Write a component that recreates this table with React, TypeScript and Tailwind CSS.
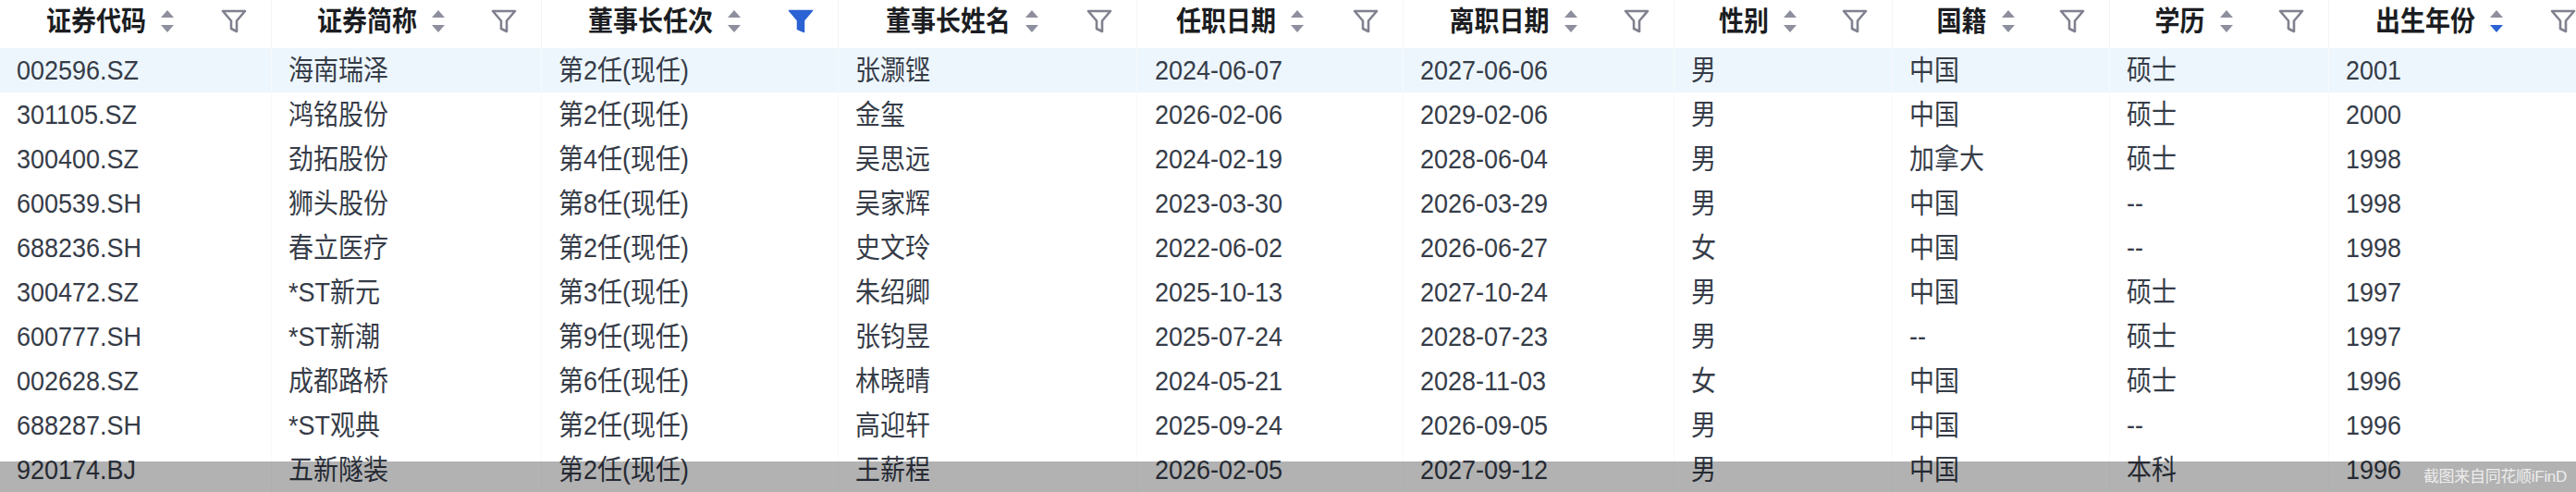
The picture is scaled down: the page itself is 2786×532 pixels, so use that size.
import React from 'react';

type Col = {
  title: string;
  width: string;
  right?: boolean;
  sortDown?: boolean;
  filterOn?: boolean;
};

const cols: Col[] = [
  { title: '证券代码', width: '294px' },
  { title: '证券简称', width: '292px' },
  { title: '董事长任次', width: '321px', filterOn: true },
  { title: '董事长姓名', width: '323px' },
  { title: '任职日期', width: '288px', right: true },
  { title: '离职日期', width: '293px' },
  { title: '性别', width: '236px' },
  { title: '国籍', width: '235px' },
  { title: '学历', width: '237px' },
  { title: '出生年份', width: '294px', sortDown: true },
];

const rows: string[][] = [
  ['002596.SZ', '海南瑞泽', '第2任(现任)', '张灏铿', '2024-06-07', '2027-06-06', '男', '中国', '硕士', '2001'],
  ['301105.SZ', '鸿铭股份', '第2任(现任)', '金玺', '2026-02-06', '2029-02-06', '男', '中国', '硕士', '2000'],
  ['300400.SZ', '劲拓股份', '第4任(现任)', '吴思远', '2024-02-19', '2028-06-04', '男', '加拿大', '硕士', '1998'],
  ['600539.SH', '狮头股份', '第8任(现任)', '吴家辉', '2023-03-30', '2026-03-29', '男', '中国', '--', '1998'],
  ['688236.SH', '春立医疗', '第2任(现任)', '史文玲', '2022-06-02', '2026-06-27', '女', '中国', '--', '1998'],
  ['300472.SZ', '*ST新元', '第3任(现任)', '朱绍卿', '2025-10-13', '2027-10-24', '男', '中国', '硕士', '1997'],
  ['600777.SH', '*ST新潮', '第9任(现任)', '张钧昱', '2025-07-24', '2028-07-23', '男', '--', '硕士', '1997'],
  ['002628.SZ', '成都路桥', '第6任(现任)', '林晓晴', '2024-05-21', '2028-11-03', '女', '中国', '硕士', '1996'],
  ['688287.SH', '*ST观典', '第2任(现任)', '高迎轩', '2025-09-24', '2026-09-05', '男', '中国', '--', '1996'],
  ['920174.BJ', '五新隧装', '第2任(现任)', '王薪程', '2026-02-05', '2027-09-12', '男', '中国', '本科', '1996'],
];

const gridCols =
  'grid-cols-[294px_292px_321px_323px_288px_293px_236px_235px_237px_294px]';

function SortIcon({ down }: { down?: boolean }) {
  return (
    <svg width="16" height="28" viewBox="0 0 16 28" className="shrink-0">
      <path d="M8 2 L15 10 H1 Z" fill="#8e8f9e" />
      <path d="M1 18 H15 L8 26 Z" fill={down ? '#2b62d4' : '#8e8f9e'} />
    </svg>
  );
}

function FilterIcon({ on }: { on?: boolean }) {
  if (on) {
    return (
      <svg width="28" height="26" viewBox="0 0 28 26">
        <path d="M1.5 1.5 H26.5 L17.5 12 V24.5 L10.5 21.5 V12 Z" fill="#2b62d4" stroke="#2b62d4" strokeWidth="1.5" strokeLinejoin="round" />
      </svg>
    );
  }
  return (
    <svg width="28" height="26" viewBox="0 0 28 26">
      <path
        d="M2 2 H26 L17 12.5 V24 L11 21 V12.5 Z"
        fill="none"
        stroke="#80818f"
        strokeWidth="2.6"
        strokeLinejoin="round"
      />
    </svg>
  );
}

export default function App() {
  return (
    <div
      className="relative w-[2786px] h-[532px] overflow-hidden bg-white"
      style={{ fontFamily: '"Liberation Sans", "Noto Sans CJK SC", sans-serif' }}
    >
      <div className="w-[2813px]">
        {/* header */}
        <div className={`grid ${gridCols} h-[52px] bg-white`}>
          {cols.map((c) => (
            <div key={c.title} className="flex items-center pb-[6px] border-r border-[#f3f4f6]">
              <div
                className={`flex-1 flex items-center gap-[15px] ${c.right ? 'justify-end pr-[52px]' : 'justify-center'}`}
              >
                <span className="inline-block scale-y-110 text-[27px] font-bold text-[#1b1d22] leading-none whitespace-nowrap">
                  {c.title}
                </span>
                <SortIcon down={c.sortDown} />
              </div>
              <div className="w-[54px] pr-[26px] flex justify-center">
                <FilterIcon on={c.filterOn} />
              </div>
            </div>
          ))}
        </div>

        {/* body */}
        {rows.map((r, i) => (
          <div
            key={r[0]}
            className={`grid ${gridCols} h-[48px] ${i === 0 ? 'bg-[#edf6fd]' : 'bg-white'}`}
          >
            {r.map((v, j) => (
              <div
                key={j}
                className={`flex items-center border-r border-[#f8f9fa] text-[27px] text-[#363c48] whitespace-nowrap ${
                  cols[j].right ? 'justify-end pr-[130px]' : 'pl-[18px]'
                }`}
              >
                <span className="inline-block scale-y-110 leading-none">{v}</span>
              </div>
            ))}
          </div>
        ))}
      </div>

      {/* screenshot watermark band */}
      <div className="absolute left-0 right-0 bottom-0 h-[33px] bg-black/30 flex items-center justify-end pr-[10px]">
        <span className="text-[17px] text-[#ededed] tracking-[-0.3px]">截图来自同花顺iFinD</span>
      </div>
    </div>
  );
}
